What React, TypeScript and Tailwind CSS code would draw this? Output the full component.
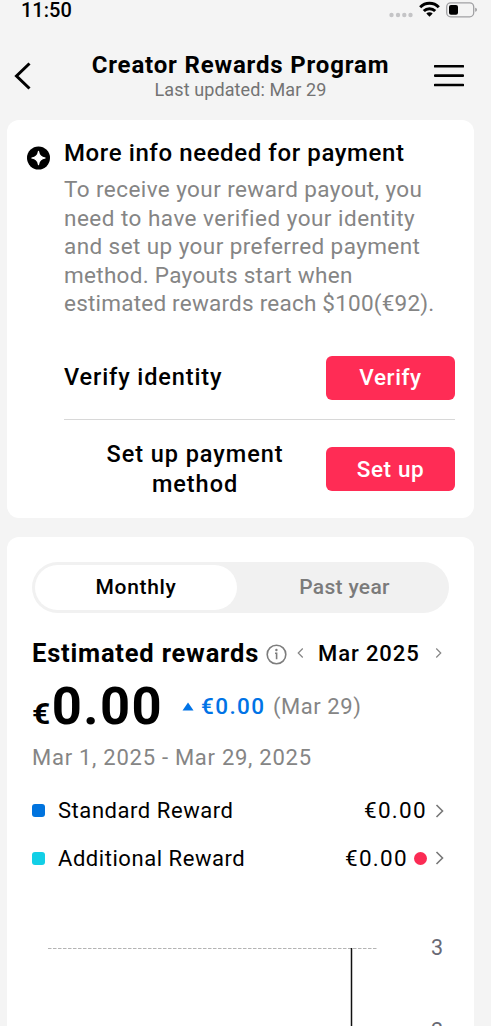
import React, { useState } from 'react';

type Period = 'monthly' | 'yearly';

const SignalIcons: React.FC = () => (
  <div className="flex items-start">
    <svg width="24" height="20" viewBox="0 0 24 20" fill="#c4c4c6">
      {[2.5, 9, 15.3, 21.5].map((x) => (
        <circle key={x} cx={x} cy="15" r="2.2" />
      ))}
    </svg>
    <svg className="ml-1.5" width="21" height="18" viewBox="0 0 21 18" fill="none" stroke="#000" strokeWidth="3">
      <path d="M1.2 7.2a13.2 13.2 0 0 1 18.6 0" />
      <path d="M4.8 11a8.1 8.1 0 0 1 11.4 0" />
      <path d="M7.3 13.6a4.6 4.6 0 0 1 6.4 0L10.5 16.8Z" fill="#000" stroke="none" />
    </svg>
    <svg className="ml-1.5" width="32" height="20" viewBox="0 0 32 20">
      <rect x="0.7" y="2.8" width="27" height="14" rx="4" fill="none" stroke="#a0a0a3" strokeWidth="1.3" />
      <rect x="3" y="5" width="9" height="9.8" rx="2" fill="#000" />
      <path d="M29.3 7.8c2 .5 2 3.5 0 4Z" fill="#8e8e91" />
    </svg>
  </div>
);

const Chevron: React.FC<{ left?: boolean; className?: string }> = ({ left, className }) => (
  <svg className={className} width="9" height="16" viewBox="0 0 9 16" fill="none" stroke="currentColor" strokeWidth="1.6">
    <path d={left ? 'M7.5 2 1.5 8l6 6' : 'M1.5 2l6 6-6 6'} />
  </svg>
);

const App: React.FC = () => {
  const [period, setPeriod] = useState<Period>('monthly');

  const rewards = [
    { label: 'Standard Reward', amount: '€0.00', color: 'bg-[#0073de]', isNew: false },
    { label: 'Additional Reward', amount: '€0.00', color: 'bg-[#12cfe6]', isNew: true },
  ];

  return (
    <div className="h-[1026px] w-[491px] overflow-hidden bg-[#f4f4f4] font-[Roboto,sans-serif] text-black">
      {/* Status bar */}
      <div className="flex h-10 justify-between pl-[21px] pr-[13px]">
        <span className="h-5 text-[20px] leading-5 font-medium">11:50</span>
        <SignalIcons />
      </div>

      {/* Header */}
      <header className="flex h-20 items-start justify-between pl-[13px] pr-[27px]">
        <svg className="mt-[21px]" width="20" height="30" viewBox="0 0 20 30" fill="none" stroke="#000" strokeWidth="3">
          <path d="M16.5 2.5 3.5 15l13 12.5" />
        </svg>
        <div className="ml-3.5 text-center whitespace-nowrap">
          <h1 className="mt-[9px] text-[24px] leading-8 font-bold tracking-[0.83px]">Creator Rewards Program</h1>
          <p className="-mt-px text-[18px] leading-5 text-[#737373] tracking-[0.1px]">Last updated: Mar 29</p>
        </div>
        <svg className="mt-[22px]" width="30" height="28" viewBox="0 0 30 28" stroke="#000" strokeWidth="2.6" strokeLinecap="round">
          <path d="M1 4.3h28M1 13.6h28M1 23h28" />
        </svg>
      </header>

      {/* Payment info */}
      <section className="ml-[7px] flex h-[398px] w-[467px] rounded-xl bg-white pl-5 pr-[19px]">
        <svg className="mt-[26px] shrink-0" width="23" height="24" viewBox="0 0 23 24">
          <circle cx="11.5" cy="12" r="11.5" />
          <path d="M11.5 5.3Q12.3 11.2 18.2 12 12.3 12.8 11.5 18.7 10.7 12.8 4.8 12 10.7 11.2 11.5 5.3Z" fill="#fff" stroke="#fff" strokeWidth="1.2" strokeLinejoin="round" />
        </svg>
        <div className="ml-3.5 flex-1 pt-[17px]">
          <h2 className="text-[24px] leading-8 font-medium tracking-[0.6px] whitespace-nowrap">More info needed for payment</h2>
          <p className="mt-1.5 text-[22.5px] leading-[28.5px] tracking-[0.42px] whitespace-nowrap text-[#858585]">
            To receive your reward payout, you<br />
            <span className="tracking-[0.48px]">need to have verified your identity</span><br />
            and set up your preferred payment<br />
            <span className="tracking-[0.3px]">method. Payouts start when</span><br />
            <span className="tracking-[0.22px]">estimated rewards reach $100(€92).</span>
          </p>
          <div className="mt-[38px] flex h-[64px] items-start justify-between border-b border-[#d8d8d8]">
            <span className="mt-[5px] text-[23.5px] leading-8 font-medium tracking-[0.88px]">Verify identity</span>
            <button className="h-11 w-[129px] rounded-md bg-[#ff2c55] text-[22.5px] font-medium tracking-[0.6px] text-white">Verify</button>
          </div>
          <div className="mt-[19px] flex items-start">
            <span className="w-[262px] text-center text-[23.5px] leading-[30px] font-medium tracking-[0.95px]">
              Set up payment<br />method
            </span>
            <button className="mt-2 h-11 w-[129px] rounded-md bg-[#ff2c55] pt-0.5 text-[22.5px] font-medium tracking-[0.6px] text-white">Set up</button>
          </div>
        </div>
      </section>

      {/* Rewards */}
      <section className="mt-[19px] ml-[7px] h-[520px] w-[467px] rounded-t-xl bg-white pt-[25px] pl-[25px]">
        <div className="flex h-[51px] w-[417px] rounded-full bg-[#f1f1f1] p-[3px]">
          <button
            onClick={() => setPeriod('monthly')}
            className={`w-[202px] rounded-full text-[21px] font-medium tracking-[0.65px] ${period === 'monthly' ? 'bg-white text-black' : 'text-[#7b7b7b]'}`}
          >
            Monthly
          </button>
          <button
            onClick={() => setPeriod('yearly')}
            className={`flex-1 rounded-full pl-1.5 text-[21px] font-medium tracking-[0.3px] ${period === 'yearly' ? 'bg-white text-black' : 'text-[#7b7b7b]'}`}
          >
            Past year
          </button>
        </div>

        <div className="mt-6 flex h-8 w-[411px] items-center whitespace-nowrap">
          <h2 className="w-[227px] text-[25.5px] leading-8 font-bold tracking-[0.8px]">Estimated rewards</h2>
          <svg className="mt-0.5 ml-[7px]" width="21" height="21" viewBox="0 0 21 21" fill="none" stroke="#7d7d7d" strokeWidth="1.6">
            <circle cx="10.5" cy="10.5" r="9.3" />
            <path d="M9 9.2h1.6v6" />
            <circle cx="10.4" cy="6" r="1.2" fill="#7d7d7d" stroke="none" />
          </svg>
          <Chevron left className="ml-[9px] h-3 text-[#858585]" />
          <span className="ml-[13px] w-[103px] text-[22px] font-medium tracking-[0.9px]">Mar 2025</span>
          <Chevron className="ml-auto h-3 text-[#858585]" />
        </div>

        <div className="mt-1 flex h-[66px] items-center whitespace-nowrap">
          <div className="flex w-[131px] items-baseline font-bold">
            <span className="w-5 origin-bottom-left scale-x-110 text-[29px]">€</span>
            <span className="text-[52.5px] leading-[60px] tracking-[1.4px]">0.00</span>
          </div>
          <svg className="ml-[19px]" width="12" height="9" viewBox="0 0 12 9" fill="#0073e6">
            <path d="M6 0.5 11.5 8.5H0.5Z" />
          </svg>
          <span className="mt-0.5 ml-[7px] w-[65px] text-[22.5px] font-medium tracking-[1.4px] text-[#0073e6]">€0.00</span>
          <span className="ml-[7px] text-[22px] tracking-[0.55px] text-[#858585]">(Mar 29)</span>
        </div>
        <p className="mt-[3px] text-[22px] leading-8 tracking-[0.73px] whitespace-nowrap text-[#858585]">Mar 1, 2025 - Mar 29, 2025</p>

        <div className="mt-[13px]">
          {rewards.map((r) => (
            <div key={r.label} className="flex h-[47.5px] w-[412px] items-center text-[22px] tracking-[0.55px]">
              <span className={`size-[13px] rounded-[3px] ${r.color}`} />
              <span className="ml-[13px]">{r.label}</span>
              <span className="ml-auto pt-px text-[22.5px] tracking-[1.3px]">{r.amount}</span>
              {r.isNew && <span className="ml-1.5 size-[13px] rounded-full bg-[#fb2b54]" />}
              <Chevron className="ml-2 text-[#777]" />
            </div>
          ))}
        </div>

        {/* Chart */}
        <svg className="mt-[48px] block" width="435" height="100" viewBox="0 0 435 100" fontFamily="Roboto, sans-serif">
          <path d="M16 18.5h330" stroke="#b4b4b4" strokeDasharray="3.5 1.5" />
          <path d="M319.5 18v82" stroke="#111" strokeWidth="1.5" />
          <text x="399" y="24.5" fontSize="21.5" fill="#686974">3</text>
          <text x="399" y="107.5" fontSize="21.5" fill="#686974">2</text>
        </svg>
      </section>
    </div>
  );
};

export default App;
